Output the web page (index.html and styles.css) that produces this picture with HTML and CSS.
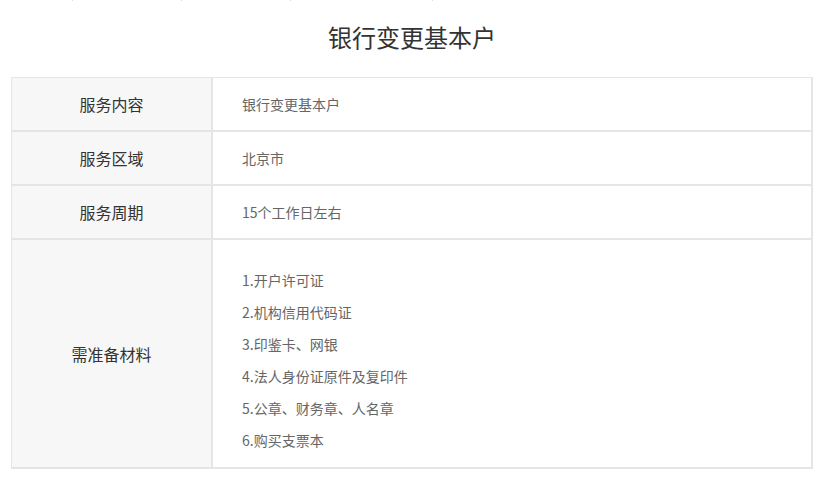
FILE: index.html
```html
<!DOCTYPE html>
<html lang="zh-CN">
<head>
<meta charset="utf-8">
<title>银行变更基本户</title>
<link rel="stylesheet" href="styles.css">
</head>
<body>
<div class="topmarks">
  <span class="mark m1"></span>
  <span class="mark m2"></span>
  <span class="mark m3"></span>
  <span class="mark m4"></span>
</div>
<h1 class="title">银行变更基本户</h1>
<div class="table">
  <div class="row">
    <div class="label">服务内容</div>
    <div class="value">银行变更基本户</div>
  </div>
  <div class="row">
    <div class="label">服务区域</div>
    <div class="value">北京市</div>
  </div>
  <div class="row">
    <div class="label">服务周期</div>
    <div class="value">15个工作日左右</div>
  </div>
  <div class="row tall">
    <div class="label">需准备材料</div>
    <div class="value list">
      <p>1.开户许可证</p>
      <p>2.机构信用代码证</p>
      <p>3.印鉴卡、网银</p>
      <p>4.法人身份证原件及复印件</p>
      <p>5.公章、财务章、人名章</p>
      <p>6.购买支票本</p>
    </div>
  </div>
</div>
</body>
</html>
```
FILE: styles.css
```css
html, body {
  margin: 0;
  padding: 0;
  background: #fff;
  font-family: "Microsoft YaHei", "Noto Sans CJK SC", "Noto Sans", sans-serif;
  color: #333;
}

.topmarks {
  height: 1px;
  display: flex;
}
.mark {
  width: 1px;
  height: 1px;
  background: #ddd;
}
.m1 { margin-left: 72px; }
.m2 { margin-left: 108px; }
.m3 { margin-left: 108px; }
.m4 { margin-left: 141px; }

.title {
  margin: 0;
  height: 76px;
  box-sizing: border-box;
  padding-top: 19px;
  line-height: 34px;
  font-size: 24px;
  font-weight: normal;
  text-align: center;
  color: #333;
}

.table {
  margin-left: 11px;
  width: 802px;
  border-top: 1px solid #e5e5e5;
  border-left: 1px solid #e5e5e5;
  box-sizing: border-box;
}

.row {
  display: grid;
  grid-template-columns: 201px 1fr;
  height: 54px;
}
.row.tall {
  height: 229px;
}

.label {
  background: #f7f7f7;
  border-right: 2px solid #e5e5e5;
  border-bottom: 2px solid #e5e5e5;
  display: flex;
  align-items: center;
  justify-content: center;
  font-size: 16px;
  color: #333;
}

.value {
  border-right: 2px solid #e5e5e5;
  border-bottom: 2px solid #e5e5e5;
  display: flex;
  align-items: center;
  padding-left: 29px;
  font-size: 14px;
  color: #666;
}

.value.list {
  flex-direction: column;
  align-items: flex-start;
  justify-content: flex-start;
  padding-top: 24px;
}
.value.list p {
  margin: 0;
  line-height: 32px;
  height: 32px;
}
```
